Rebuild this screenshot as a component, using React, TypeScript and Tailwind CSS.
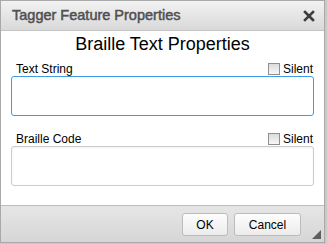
import React from "react";

export default function App() {
  const font = { fontFamily: '"Liberation Sans", Arial, sans-serif' };
  return (
    <div className="w-[327px] h-[244px] bg-[#c9c9c9] overflow-hidden" style={font}>
      <div className="w-[325px] h-[243px] border border-[#a9a9a9] bg-white flex flex-col relative">
        {/* Title bar */}
        <div className="h-[30px] shrink-0 flex items-center justify-between pl-[11px] pr-[8px] bg-gradient-to-b from-[#f2f2f2] to-[#d9d9d9] border-b border-[#c4c4c4]">
          <span className="text-[14.5px] font-normal text-[#505050] leading-none [-webkit-text-stroke:0.5px_#505050]">Tagger Feature Properties</span>
          <svg width="12" height="12" viewBox="0 0 12 12" className="mr-[1px]">
            <path d="M2 2 L10 10 M10 2 L2 10" stroke="#3d3d3d" strokeWidth="2.6" strokeLinecap="square" />
          </svg>
        </div>
        {/* Body */}
        <div className="flex-1 flex flex-col px-[10px]">
          <div className="text-center text-[18px] text-black leading-none mt-[4px]">Braille Text Properties</div>
          <div className="flex items-end justify-between mt-[10px] pl-[5px] pr-[1px]">
            <span className="text-[12px] text-black leading-none">Text String</span>
            <label className="flex items-center gap-[3px] text-[12px] text-black leading-none">
              <span className="w-[12px] h-[12px] border border-[#8f8f8f] bg-gradient-to-b from-[#dcdcdc] to-[#f7f7f7] inline-block" />
              Silent
            </label>
          </div>
          <div className="mt-[1px] h-[40px] border border-[#3f9ae8] rounded-[3px] bg-white" />
          <div className="flex items-end justify-between mt-[17px] pl-[5px] pr-[1px]">
            <span className="text-[12px] text-black leading-none">Braille Code</span>
            <label className="flex items-center gap-[3px] text-[12px] text-black leading-none">
              <span className="w-[12px] h-[12px] border border-[#8f8f8f] bg-gradient-to-b from-[#dcdcdc] to-[#f7f7f7] inline-block" />
              Silent
            </label>
          </div>
          <div className="mt-[1px] h-[40px] border border-[#cccccc] rounded-[3px] bg-white shadow-[inset_0_1px_2px_rgba(0,0,0,0.06)]" />
        </div>
        {/* Footer */}
        <div className="h-[37px] shrink-0 border-t border-[#bdbdbd] bg-gradient-to-b from-[#e6e6e6] to-[#d6d6d6] flex items-center justify-end gap-[6px] pr-[23px] pt-[1px]">
          <button className="w-[46px] h-[23px] border border-[#bcbcbc] rounded-[3px] bg-gradient-to-b from-[#fdfdfd] to-[#ececec] text-[12px] text-black">OK</button>
          <button className="w-[67px] h-[23px] border border-[#bcbcbc] rounded-[3px] bg-gradient-to-b from-[#fdfdfd] to-[#ececec] text-[12px] text-black">Cancel</button>
        </div>
        <svg width="9" height="9" viewBox="0 0 9 9" className="absolute right-[3px] bottom-[3px]">
          <path d="M9 0 L9 9 L0 9 Z" fill="#5e5e5e" />
        </svg>
      </div>
    </div>
  );
}
